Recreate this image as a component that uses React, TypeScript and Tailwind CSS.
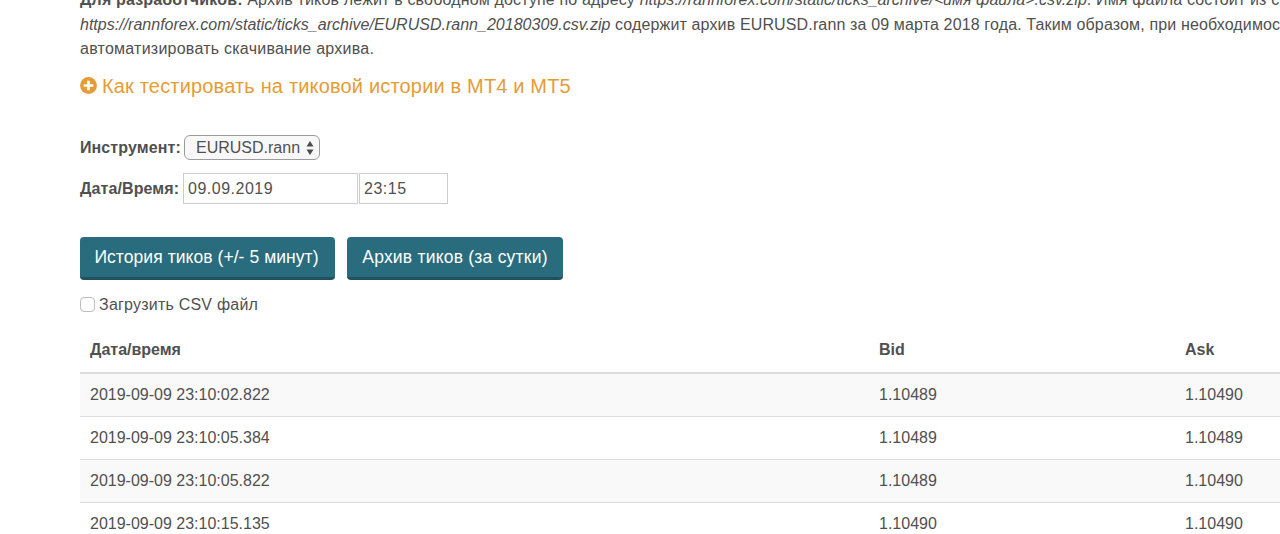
import { useState } from "react";

const ticks = [
  { time: "2019-09-09 23:10:02.822", bid: "1.10489", ask: "1.10490" },
  { time: "2019-09-09 23:10:05.384", bid: "1.10489", ask: "1.10489" },
  { time: "2019-09-09 23:10:05.822", bid: "1.10489", ask: "1.10490" },
  { time: "2019-09-09 23:10:15.135", bid: "1.10490", ask: "1.10490" },
];

export default function App() {
  const [csv, setCsv] = useState(false);

  return (
    <div className="h-[534px] overflow-hidden bg-white pl-20 font-['Liberation_Sans',Arial,sans-serif] text-base text-[#505050]">
      {/* Intro */}
      <div className="-mt-3 whitespace-nowrap leading-[24.6px]">
        <p className="tracking-[0.16px]">
          <b>Для разработчиков:</b> Архив тиков лежит в свободном доступе по адресу{" "}
          <i className="tracking-[0.015px]">https://rannforex.com/static/ticks_archive/&lt;имя файла&gt;.csv.zip</i>. Имя
          файла состоит из си
        </p>
        <p className="tracking-[0.14px]">
          <i className="tracking-[0.01px]">https://rannforex.com/static/ticks_archive/EURUSD.rann_20180309.csv.zip</i>{" "}
          содержит архив EURUSD.rann за 09 марта 2018 года. Таким образом, при необходимост
        </p>
        <p className="tracking-[0.24px]">автоматизировать скачивание архива.</p>
      </div>

      <a className="mt-2 flex h-8 items-center text-xl tracking-[0.17px] text-[#e69c35]">
        <svg viewBox="0 0 17 17" className="mr-[5px] size-[17px]">
          <circle cx="8.5" cy="8.5" r="8.4" fill="currentColor" />
          <path d="M8.5 3.7v9.6M3.7 8.5h9.6" stroke="#fff" strokeWidth="2.7" />
        </svg>
        <span>Как тестировать на тиковой истории в МТ4 и МТ5</span>
      </a>

      {/* Filters */}
      <div className="mt-[33px] flex h-[26px] items-center">
        <label className="w-[104px] font-bold tracking-[0.1px]">Инструмент:</label>
        <button className="flex h-[25px] w-[136px] items-center justify-between rounded-[6px] border border-[#9c9c9c] bg-[#f8f8f8] pr-[5px] pl-[11px] leading-[22px]">
          <span>EURUSD.rann</span>
          <svg viewBox="0 0 8 14" className="h-[14px] w-2" fill="#4b4b4b">
            <path d="M4 0l3.5 5.6h-7zM4 14L.5 8.4h7z" />
          </svg>
        </button>
      </div>
      <div className="mt-[12px] flex h-8 items-center">
        <label className="w-[103px] font-bold tracking-[0.1px]">Дата/Время:</label>
        <input
          defaultValue="09.09.2019"
          className="h-[31px] w-[175px] border border-[#ccc] px-1 tracking-[0.5px] outline-none"
        />
        <input
          defaultValue="23:15"
          className="ml-px h-[31px] w-[89px] border border-[#ccc] px-1 tracking-[0.5px] outline-none"
        />
      </div>

      {/* Actions */}
      <div className="mt-[32px] flex gap-3 text-[17.5px] text-white">
        <button className="h-[43px] w-[255px] rounded-[4px] border-b-[3px] border-[#21505e] bg-[#296c7e] pt-px pr-[2px] tracking-[0.06px] whitespace-nowrap">
          История тиков (+/- 5 минут)
        </button>
        <button className="h-[43px] w-[216px] rounded-[4px] border-b-[3px] border-[#21505e] bg-[#296c7e] pt-px tracking-[0.22px] whitespace-nowrap">
          Архив тиков (за сутки)
        </button>
      </div>
      <label className="mt-[13px] flex h-6 items-center tracking-[0.22px]">
        <input
          type="checkbox"
          checked={csv}
          onChange={() => setCsv(!csv)}
          className="mr-1 size-[15px] appearance-none rounded-[4px] border border-[#bdbdbd] bg-white"
        />
        <span>Загрузить CSV файл</span>
      </label>

      {/* Ticks */}
      <table className="mt-[11px] w-[1200px] table-fixed border-collapse text-left">
        <thead>
          <tr className="h-[45px] border-b-2 border-[#ddd]">
            <th className="w-[790px] pt-px pl-[10px]">Дата/время</th>
            <th className="w-[306px] pt-px pl-[9px]">Bid</th>
            <th className="pt-px pl-[9px]">Ask</th>
          </tr>
        </thead>
        <tbody>
          {ticks.map((t) => (
            <tr key={t.time} className="h-[43px] border-b border-[#ddd] first:h-11 odd:bg-[#f9f9f9]">
              <td className="pl-[10px]">{t.time}</td>
              <td className="pl-[9px]">{t.bid}</td>
              <td className="pl-[9px]">{t.ask}</td>
            </tr>
          ))}
        </tbody>
      </table>
    </div>
  );
}
